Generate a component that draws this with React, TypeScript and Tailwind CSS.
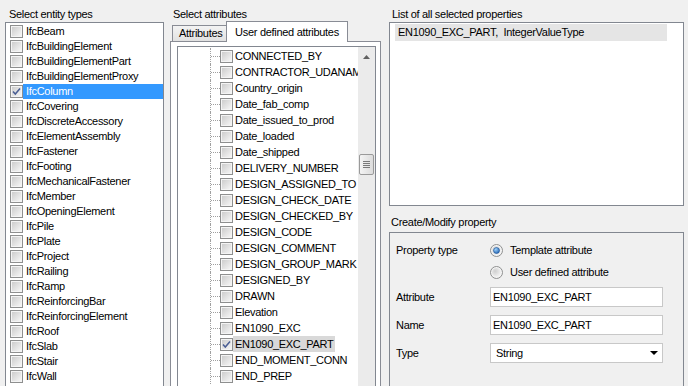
import React from "react";

const entityTypes = [
  "IfcBeam",
  "IfcBuildingElement",
  "IfcBuildingElementPart",
  "IfcBuildingElementProxy",
  "IfcColumn",
  "IfcCovering",
  "IfcDiscreteAccessory",
  "IfcElementAssembly",
  "IfcFastener",
  "IfcFooting",
  "IfcMechanicalFastener",
  "IfcMember",
  "IfcOpeningElement",
  "IfcPile",
  "IfcPlate",
  "IfcProject",
  "IfcRailing",
  "IfcRamp",
  "IfcReinforcingBar",
  "IfcReinforcingElement",
  "IfcRoof",
  "IfcSlab",
  "IfcStair",
  "IfcWall",
];

const attributes = [
  "CONNECTED_BY",
  "CONTRACTOR_UDANAME",
  "Country_origin",
  "Date_fab_comp",
  "Date_issued_to_prod",
  "Date_loaded",
  "Date_shipped",
  "DELIVERY_NUMBER",
  "DESIGN_ASSIGNED_TO",
  "DESIGN_CHECK_DATE",
  "DESIGN_CHECKED_BY",
  "DESIGN_CODE",
  "DESIGN_COMMENT",
  "DESIGN_GROUP_MARK",
  "DESIGNED_BY",
  "DRAWN",
  "Elevation",
  "EN1090_EXC",
  "EN1090_EXC_PART",
  "END_MOMENT_CONN",
  "END_PREP",
];

const CheckBox = ({ checked }: { checked?: boolean }) => (
  <svg width="13" height="13" viewBox="0 0 13 13" className="shrink-0 block">
    <defs>
      <linearGradient id="cbfill" x1="0" y1="0" x2="1" y2="1">
        <stop offset="0" stopColor="#cdcdcd" />
        <stop offset="1" stopColor="#f5f5f5" />
      </linearGradient>
    </defs>
    <rect x="0.5" y="0.5" width="12" height="12" fill="#f4f4f4" stroke="#8e8f8f" />
    <rect x="2" y="2" width="9" height="9" fill="url(#cbfill)" />
    {checked && (
      <path d="M3 6.4 5.3 9 10 3.4" fill="none" stroke="#4a5e94" strokeWidth="1.5" />
    )}
  </svg>
);

const Radio = ({ checked }: { checked?: boolean }) => (
  <svg width="13" height="13" viewBox="0 0 13 13" className="shrink-0 block">
    <defs>
      <radialGradient id="rfill" cx="0.35" cy="0.35" r="0.8">
        <stop offset="0" stopColor="#cfcfcf" />
        <stop offset="1" stopColor="#f8f8f8" />
      </radialGradient>
      <radialGradient id="rdot" cx="0.35" cy="0.3" r="0.8">
        <stop offset="0" stopColor="#9fd3fb" />
        <stop offset="1" stopColor="#1e5fb0" />
      </radialGradient>
    </defs>
    <circle cx="6.5" cy="6.5" r="6" fill="#f4f4f4" stroke="#8e8f8f" />
    <circle cx="6.5" cy="6.5" r="4.5" fill="url(#rfill)" />
    {checked && (
      <circle cx="6.5" cy="6.5" r="3" fill="url(#rdot)" stroke="#1a4f94" strokeWidth="0.6" />
    )}
  </svg>
);

const FieldRow = ({ label, children, className = "" }: { label: string; children: React.ReactNode; className?: string }) => (
  <div className={`flex items-center h-[20px] ${className}`}>
    <div className="w-[94px] shrink-0">{label}</div>
    {children}
  </div>
);

export default function App() {
  return (
    <div className="w-[688px] h-[386px] overflow-hidden bg-[#f0f0f0] flex pl-[5px] pt-[8px] text-[11px] tracking-[-0.3px] leading-[13px] text-black font-['Liberation_Sans',sans-serif]">
      {/* entity types */}
      <div className="w-[159px] shrink-0 flex flex-col">
        <div className="h-[13px] pl-[4px]">Select entity types</div>
        <div className="mt-[1px] min-h-[380px] shrink-0 border border-[#828790] bg-white pt-[1px]">
          {entityTypes.map((name) => {
            const sel = name === "IfcColumn";
            return (
              <div key={name} className="flex items-center h-[15px]">
                <div className="ml-[4px]">
                  <CheckBox checked={sel} />
                </div>
                <div
                  className={`flex-1 h-full pl-[3px] leading-[15px] whitespace-nowrap ${
                    sel ? "bg-[#3399ff] text-white" : ""
                  }`}
                >
                  {name}
                </div>
              </div>
            );
          })}
        </div>
      </div>

      {/* attributes */}
      <div className="ml-[6px] w-[211px] shrink-0 flex flex-col">
        <div className="h-[13px] pl-[3px]">Select attributes</div>
        <div className="h-[21px] flex items-end pl-[2px]">
          <div className="w-[55px] h-[16px] border border-[#898c95] border-b-0 bg-gradient-to-b from-[#f3f3f3] to-[#e1e1e1] pl-[6px] leading-[15px] whitespace-nowrap">
            Attributes
          </div>
          <div className="relative z-10 -ml-[1px] -mb-[1px] w-[122px] h-[21px] border border-[#898c95] border-b-0 bg-white text-center leading-[20px] whitespace-nowrap">
            User defined attributes
          </div>
        </div>
        <div className="border border-[#898c95] bg-white pt-[4px] pl-[6px] pr-[4px]">
          <div className="min-h-[345px] border border-[#828790] flex">
            <div className="flex-1 overflow-hidden pt-[1px]">
              {attributes.map((name) => {
                const sel = name === "EN1090_EXC_PART";
                return (
                  <div key={name} className="flex items-center h-[16px]">
                    <div className="w-[32px] shrink-0" />
                    <div className="w-[10px] h-full shrink-0 border-l border-dotted border-[#a0a0a0] flex items-center">
                      <div className="w-full border-t border-dotted border-[#a0a0a0]" />
                    </div>
                    <CheckBox checked={sel} />
                    <div
                      className={`h-full pl-[2px] pr-[2px] leading-[16px] whitespace-nowrap ${
                        sel ? "bg-[#d9d9d9]" : ""
                      }`}
                    >
                      {name}
                    </div>
                  </div>
                );
              })}
            </div>
            <div className="w-[17px] shrink-0 bg-[#ebebeb] flex flex-col items-center">
              <div className="h-[17px] w-full flex items-center justify-center pt-[2px]">
                <svg width="7" height="4" viewBox="0 0 7 4">
                  <polygon points="0,4 7,4 3.5,0" fill="#606060" />
                </svg>
              </div>
              <div className="mt-[90px] w-[15px] h-[21px] rounded-[2px] border border-[#9a9a9a] bg-gradient-to-r from-[#f4f4f4] to-[#dcdcdc] flex items-center justify-center">
                <svg width="7" height="7" viewBox="0 0 7 7">
                  <rect x="0" y="0" width="7" height="1" fill="#7a7a7a" />
                  <rect x="0" y="2" width="7" height="1" fill="#7a7a7a" />
                  <rect x="0" y="4" width="7" height="1" fill="#7a7a7a" />
                  <rect x="0" y="6" width="7" height="1" fill="#7a7a7a" />
                </svg>
              </div>
            </div>
          </div>
        </div>
      </div>

      {/* selected properties */}
      <div className="ml-[8px] w-[295px] shrink-0 flex flex-col">
        <div className="h-[13px] pl-[3px]">List of all selected properties</div>
        <div className="mt-[1px] h-[184px] shrink-0 border border-[#828790] bg-white pt-[1px] pl-[5px]">
          <div className="w-[272px] h-[17px] bg-[#e5e5e5] pl-[3px] leading-[17px] whitespace-pre">
            EN1090_EXC_PART,  IntegerValueType
          </div>
        </div>
        <div className="mt-[10px] h-[13px] pl-[2px]">Create/Modify property</div>
        <div className="mt-[3px] h-[170px] shrink-0 border border-[#828790] pl-[6px] pt-[7px] flex flex-col">
          <FieldRow label="Property type">
            <Radio checked />
            <span className="ml-[7px]">Template attribute</span>
          </FieldRow>
          <FieldRow label="" className="mt-[2px]">
            <Radio />
            <span className="ml-[7px]">User defined attribute</span>
          </FieldRow>
          <FieldRow label="Attribute" className="mt-[5px]">
            <div className="w-[173px] h-[20px] border border-[#c8c8c8] bg-white pl-[2px] leading-[18px]">
              EN1090_EXC_PART
            </div>
          </FieldRow>
          <FieldRow label="Name" className="mt-[8px]">
            <div className="w-[173px] h-[20px] border border-[#c8c8c8] bg-white pl-[2px] leading-[18px]">
              EN1090_EXC_PART
            </div>
          </FieldRow>
          <FieldRow label="Type" className="mt-[8px]">
            <div className="w-[173px] h-[20px] border border-[#c8c8c8] bg-white pl-[5px] pr-[4px] flex items-center justify-between">
              <span>String</span>
              <svg width="8" height="4" viewBox="0 0 8 4">
                <polygon points="0,0 8,0 4,4" fill="#000" />
              </svg>
            </div>
          </FieldRow>
        </div>
      </div>
    </div>
  );
}
